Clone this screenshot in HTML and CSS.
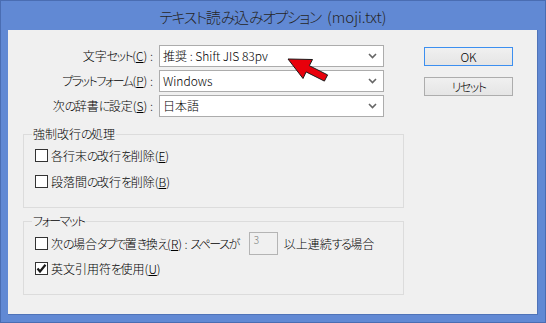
FILE: index.html
```html
<!DOCTYPE html>
<html lang="ja">
<head>
<meta charset="utf-8">
<title>テキスト読み込みオプション</title>
<link rel="stylesheet" href="styles.css">
</head>
<body>
<div class="window">
  <div class="titlebar"><span class="k">テキスト</span>読<span class="k">み</span>込<span class="k">みオプション</span> <span class="fn">(moji.txt)</span></div>
  <div class="client">
    <div class="top">
      <div class="form">
        <label class="lbl">文字<span class="k">セット</span>(<u>C</u>) :</label>
        <div class="select"><span>推奨 : Shift JIS 83pv</span><svg class="chev" width="9" height="6" viewBox="0 0 9 6"><path d="M1 1 L4.5 4.5 L8 1" fill="none" stroke="#666" stroke-width="1.6"/></svg></div>
        <label class="lbl"><span class="k">プラットフォーム</span>(<u>P</u>) :</label>
        <div class="select"><span>Windows</span><svg class="chev" width="9" height="6" viewBox="0 0 9 6"><path d="M1 1 L4.5 4.5 L8 1" fill="none" stroke="#666" stroke-width="1.6"/></svg></div>
        <label class="lbl">次<span class="k">の</span>辞書<span class="k">に</span>設定(<u>S</u>) :</label>
        <div class="select"><span>日本語</span><svg class="chev" width="9" height="6" viewBox="0 0 9 6"><path d="M1 1 L4.5 4.5 L8 1" fill="none" stroke="#666" stroke-width="1.6"/></svg></div>
      </div>
      <div class="buttons">
        <div class="btn default">OK</div>
        <div class="btn"><span class="k">リセット</span></div>
      </div>
    </div>

    <fieldset class="group g1">
      <legend>強制改行<span class="k">の</span>処理</legend>
      <div class="row"><span class="cb"></span><span>各行末<span class="k">の</span>改行<span class="k">を</span>削除(<u>E</u>)</span></div>
      <div class="row second"><span class="cb"></span><span>段落間<span class="k">の</span>改行<span class="k">を</span>削除(<u>B</u>)</span></div>
    </fieldset>

    <fieldset class="group g2">
      <legend><span class="k">フォーマット</span></legend>
      <div class="row tall"><span class="cb"></span><span class="txt">次<span class="k">の</span>場合<span class="k">タブで</span>置<span class="k">き</span>換<span class="k">え</span>(<u>R</u>) : <span class="k">スペースが</span></span><span class="num">3</span><span>以上連続<span class="k">する</span>場合</span></div>
      <div class="row second2"><span class="cb checked"><svg width="11" height="11" viewBox="0 0 11 11"><path d="M1.5 5.5 L4 8.5 L9.5 1.8" fill="none" stroke="#1a1a1a" stroke-width="2.2"/></svg></span><span>英文引用符<span class="k">を</span>使用(<u>U</u>)</span></div>
    </fieldset>
  </div>

  <svg class="arrow" width="546" height="323" viewBox="0 0 546 323">
    <polygon points="288,59 312.5,59.5 309.3,65.7 327.6,74.9 324.4,81.1 306.1,71.9 303,78.5" fill="#e8000b" stroke="#1a1a1a" stroke-width="1" stroke-linejoin="miter"/>
  </svg>
</div>
</body>
</html>
```

FILE: styles.css
```css
html, body {
  margin: 0;
  padding: 0;
}

body {
  font-family: "Noto Sans CJK JP", "Noto Sans", sans-serif;
  font-size: 12px;
  font-weight: 300;
  color: #000;
  font-feature-settings: "palt";
}

.k {
  letter-spacing: -1.5px;
}

.window {
  position: relative;
  box-sizing: border-box;
  width: 546px;
  height: 323px;
  background: #6189d4;
  border: 1px solid #4a6db2;
  padding: 0 7px 7px 7px;
  display: flex;
  flex-direction: column;
}

.titlebar {
  height: 29px;
  box-sizing: border-box;
  padding-top: 4px;
  text-align: center;
  font-size: 15px;
  line-height: 24px;
  color: #262626;
}

.titlebar .k {
  letter-spacing: -1.5px;
}

.titlebar .fn {
  margin-left: 3px;
}

.client {
  box-sizing: border-box;
  width: 530px;
  height: 285px;
  background: #f0f0f0;
  border-right: 1px solid #4f73b8;
  border-bottom: 1px solid #4f73b8;
  padding-top: 15px;
}

.top {
  display: flex;
  align-items: flex-start;
}

.form {
  display: grid;
  grid-template-columns: 145px 225px;
  grid-auto-rows: 22px;
  column-gap: 6px;
  row-gap: 3px;
}

.lbl {
  text-align: right;
  line-height: 22px;
  white-space: nowrap;
}

.select {
  box-sizing: border-box;
  height: 22px;
  background: #fff;
  border: 1px solid #acacac;
  display: flex;
  align-items: center;
  justify-content: space-between;
  padding: 0 6px 0 3px;
  line-height: 20px;
}

.chev {
  display: block;
}

.buttons {
  margin-left: 40px;
  margin-top: 2px;
  display: flex;
  flex-direction: column;
  gap: 11px;
}

.btn {
  box-sizing: border-box;
  width: 89px;
  height: 19px;
  border: 1px solid #adadad;
  background: linear-gradient(#f0f0f0, #e5e5e5);
  text-align: center;
  line-height: 17px;
}

.btn.default {
  border-color: #3c8ff0;
}

.group {
  box-sizing: border-box;
  width: 381px;
  margin: 0 0 0 15px;
  padding: 0 0 18px 11px;
  border: 1px solid #dcdcdc;
  min-width: 0;
}

.group legend {
  margin-left: -3px;
  padding: 0 1px;
  line-height: 16px;
  height: 16px;
}

.g1 {
  margin-top: 9px;
  padding-top: 6px;
}

.g2 {
  margin-top: 5px;
  padding-top: 3px;
}

.row {
  display: flex;
  align-items: center;
  height: 15px;
  line-height: 15px;
  white-space: nowrap;
}

.row.second {
  margin-top: 11px;
}

.row.tall {
  height: 23px;
}

.row.second2 {
  margin-top: 6px;
}

.cb {
  box-sizing: border-box;
  width: 13px;
  height: 13px;
  border: 1px solid #333;
  background: #fff;
  margin-right: 3px;
  flex: none;
  display: flex;
  align-items: center;
  justify-content: center;
}

.cb svg {
  display: block;
}

.txt {
  margin-right: 10px;
}

.num {
  box-sizing: border-box;
  width: 29px;
  height: 23px;
  border: 1px solid #b4b4b4;
  background: #f0f0f0;
  color: #7a7a7a;
  font-size: 10px;
  line-height: 14px;
  padding-left: 4px;
  margin-right: 6px;
  display: block;
}

.arrow {
  position: absolute;
  left: -1px;
  top: -1px;
  pointer-events: none;
}
```
